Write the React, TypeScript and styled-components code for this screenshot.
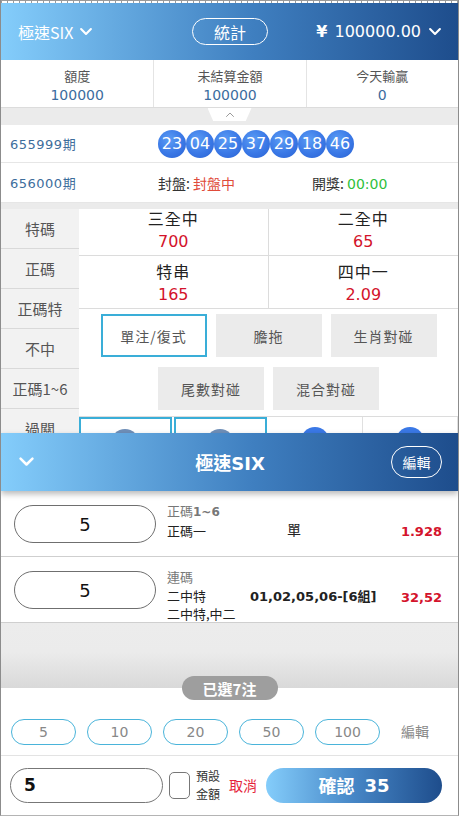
import React from "react";
import styled, { createGlobalStyle } from "styled-components";

const GlobalStyle = createGlobalStyle`
  html, body { margin: 0; padding: 0; background: #fff; }
  body { font-family: "DejaVu Sans", "Noto Sans CJK TC", sans-serif; color: #222; }
  *, *::before, *::after { box-sizing: border-box; }
`;

const BRAND_GRADIENT = "linear-gradient(to right, #84cdfb 0%, #3f7fc0 55%, #1e4d8c 100%)";

const Frame = styled.div`
  position: relative;
  width: 459px;
  height: 816px;
  overflow: hidden;
  display: flex;
  flex-direction: column;
  border-left: 1px solid #8c8c8c;
  border-right: 1px solid #8c8c8c;
  border-bottom: 1px solid #b4b4b4;
  background: #fff;
`;

const Ruler = styled.div`
  height: 3px;
  flex-shrink: 0;
  border-top: 1px solid #9a9a9a;
  background: repeating-linear-gradient(to right, #9a9a9a 0 1px, #fff 1px 6px);
`;

const TopBar = styled.header`
  height: 57px;
  flex-shrink: 0;
  display: grid;
  grid-template-columns: 1fr auto 1fr;
  align-items: center;
  padding: 0 16px 0 17px;
  background: ${BRAND_GRADIENT};
  color: #fff;
`;

const Brand = styled.div`
  display: flex;
  align-items: center;
  gap: 6px;
  font-size: 16px;
  font-family: "Noto Sans CJK TC", sans-serif;
`;

const OutlinePill = styled.div<{ $w: number; $h: number }>`
  width: ${(p) => p.$w}px;
  height: ${(p) => p.$h}px;
  border: 1.5px solid #fff;
  border-radius: ${(p) => p.$h / 2}px;
  display: flex;
  align-items: center;
  justify-content: center;
  color: #fff;
  font-size: ${(p) => (p.$h > 30 ? 14 : 16)}px;
  font-family: "Noto Sans CJK TC", sans-serif;
`;

const Balance = styled.div`
  justify-self: end;
  display: flex;
  align-items: center;
  gap: 7px;
  font-size: 16px;
  b { font-weight: 700; margin-right: 2px; }
`;

const Stats = styled.div`
  display: grid;
  grid-template-columns: repeat(3, 1fr);
  height: 48px;
  flex-shrink: 0;
  border-bottom: 1px solid #dcdcdc;
`;

const Stat = styled.div`
  display: flex;
  flex-direction: column;
  align-items: center;
  justify-content: center;
  padding-top: 4px;
  gap: 1px;
  & + & { border-left: 1px solid #e4e4e4; }
`;

const StatLabel = styled.span`
  font-size: 13px;
  line-height: 18px;
  color: #555;
  font-family: "Noto Sans CJK TC", sans-serif;
`;

const StatValue = styled.span`
  font-size: 14px;
  line-height: 19px;
  color: #3b6c9e;
`;

const Handle = styled.div`
  height: 17px;
  flex-shrink: 0;
  background: #ebebeb;
  display: flex;
  justify-content: center;
`;

const HandleTab = styled.div`
  width: 44px;
  height: 13px;
  background: #fff;
  clip-path: polygon(0 0, 100% 0, 87% 100%, 13% 100%);
  display: flex;
  align-items: center;
  justify-content: center;
`;

const DrawRow = styled.div<{ $h: number }>`
  height: ${(p) => p.$h}px;
  flex-shrink: 0;
  display: flex;
  align-items: center;
  padding-left: 9px;
  border-bottom: 1px solid #e6e6e6;
  font-size: 13px;
`;

const Period = styled.span`
  width: 148px;
  color: #3d6d9c;
  letter-spacing: 0.5px;
`;

const Balls = styled.div`
  display: flex;
`;

const Ball = styled.span`
  width: 28px;
  height: 28px;
  border-radius: 50%;
  display: flex;
  align-items: center;
  justify-content: center;
  color: #fff;
  font-size: 16px;
  background: radial-gradient(circle at 40% 35%, #5b9df5 0%, #3a78e6 55%, #2a62d2 100%);
`;

const StatusGroup = styled.span<{ $w?: number }>`
  width: ${(p) => (p.$w ? `${p.$w}px` : "auto")};
  color: #333;
  font-size: 14px;
  font-family: "Noto Sans CJK TC", "DejaVu Sans", sans-serif;
`;

const Tone = styled.span<{ $c: string }>`
  color: ${(p) => p.$c};
  font-family: "DejaVu Sans", "Noto Sans CJK TC", sans-serif;
  font-size: 14px;
`;

const Body = styled.div`
  flex: 1;
  min-height: 0;
  display: grid;
  grid-template-columns: 78px 1fr;
  border-top: 6px solid #ebebeb;
`;

const Nav = styled.nav`
  background: #f2f2f2;
  display: flex;
  flex-direction: column;
`;

const NavItem = styled.div`
  height: 40px;
  flex-shrink: 0;
  display: flex;
  align-items: center;
  justify-content: center;
  border-bottom: 1px solid #d9d9d9;
  font-size: 15px;
  color: #555;
  font-family: "Noto Sans CJK TC", "DejaVu Sans", sans-serif;
`;

const Panel = styled.div`
  min-width: 0;
`;

const OddsGrid = styled.div`
  display: grid;
  grid-template-columns: 1fr 1fr;
  grid-template-rows: 47px 53px;
`;

const OddsCell = styled.div`
  display: flex;
  flex-direction: column;
  align-items: center;
  justify-content: flex-end;
  border-bottom: 1px solid #dcdcdc;
  &:nth-child(odd) { border-right: 1px solid #dcdcdc; }
`;

const OddsTitle = styled.span`
  font-size: 16px;
  line-height: 22px;
  letter-spacing: 1px;
  color: #222;
  font-family: "Noto Sans CJK TC", sans-serif;
`;

const OddsValue = styled.span`
  font-size: 16px;
  line-height: 26px;
  color: #d3132b;
`;

const Modes = styled.div`
  display: flex;
  flex-wrap: wrap;
  justify-content: center;
  gap: 10px 9px;
  padding: 5px 0 6px;
`;

const ModeButton = styled.div<{ $active?: boolean }>`
  width: 106px;
  height: 43px;
  display: flex;
  align-items: center;
  justify-content: center;
  font-size: 14px;
  letter-spacing: 1px;
  color: #555;
  font-family: "Noto Sans CJK TC", "DejaVu Sans", sans-serif;
  background: ${(p) => (p.$active ? "#fff" : "#ebebeb")};
  border: ${(p) => (p.$active ? "2px solid #3aaed8" : "none")};
`;

const PickRow = styled.div`
  display: grid;
  grid-template-columns: repeat(4, 1fr);
  border-top: 1px solid #dcdcdc;
`;

const PickCell = styled.div<{ $active?: boolean }>`
  height: 70px;
  display: flex;
  justify-content: center;
  padding-top: 10px;
  border: ${(p) => (p.$active ? "2px solid #3aaed8" : "none")};
  border-right: ${(p) => (p.$active ? "2px solid #3aaed8" : "1px solid #e0e0e0")};
  margin-right: ${(p) => (p.$active ? "2px" : "0")};
`;

const PickBall = styled.span<{ $muted?: boolean }>`
  width: 28px;
  height: 28px;
  border-radius: 50%;
  background: ${(p) => (p.$muted ? "#6f8fb8" : "#3a78e6")};
`;

/* ---------- bottom sheet ---------- */

const Sheet = styled.section`
  position: absolute;
  left: 0;
  right: 0;
  top: 433px;
  bottom: 0;
  z-index: 5;
  display: flex;
  flex-direction: column;
  background: #fff;
`;

const SheetHeader = styled.header`
  position: relative;
  z-index: 2;
  height: 58px;
  flex-shrink: 0;
  display: grid;
  grid-template-columns: 1fr auto 1fr;
  align-items: center;
  padding: 0 16px 0 17px;
  background: ${BRAND_GRADIENT};
  box-shadow: 0 3px 6px rgba(0, 0, 0, 0.28);
  color: #fff;
`;

const SheetTitle = styled.div`
  font-size: 18px;
  font-weight: 700;
  font-family: "DejaVu Sans", "Noto Sans CJK TC", sans-serif;
`;

const HeaderEnd = styled.div`
  justify-self: end;
`;

const BetRow = styled.div`
  position: relative;
  z-index: 1;
  height: 66px;
  flex-shrink: 0;
  display: grid;
  grid-template-columns: 153px 83px 88px 1fr;
  align-items: start;
  padding: 0 16px 0 13px;
  border-bottom: 1px solid #cfcfcf;
`;

const StakeInput = styled.input`
  margin-top: 14px;
  width: 142px;
  height: 38px;
  border: 1px solid #6f6f6f;
  border-radius: 19px;
  text-align: center;
  font-size: 18px;
  font-family: "DejaVu Sans", sans-serif;
  color: #111;
  background: #fff;
  outline: none;
`;

const BetInfo = styled.div`
  padding-top: 11px;
  display: flex;
  flex-direction: column;
  font-size: 13px;
  line-height: 18.5px;
  color: #222;
  white-space: nowrap;
  font-family: "Noto Sans CJK TC", "DejaVu Sans", sans-serif;
`;

const BetCategory = styled.span`
  color: #777;
  font-family: "Noto Sans CJK TC", sans-serif;
  b { font-family: "DejaVu Sans", sans-serif; font-weight: 700; font-size: 12px; }
`;

const BetContent = styled.div<{ $bold?: boolean }>`
  padding-top: 30px;
  line-height: 19px;
  text-align: center;
  white-space: nowrap;
  font-size: ${(p) => (p.$bold ? 13 : 14)}px;
  font-weight: ${(p) => (p.$bold ? 700 : 400)};
  color: #222;
`;

const BetOdds = styled.div`
  padding-top: 31px;
  line-height: 19px;
  text-align: right;
  font-size: 13px;
  font-weight: 700;
  color: #d4132c;
`;

const Filler = styled.div`
  flex: 1;
  background: linear-gradient(to bottom, #ececec 0%, #ebebeb 45%, #d9d9d9 100%);
`;

const Footer = styled.footer`
  position: relative;
  flex-shrink: 0;
  background: #fff;
`;

const CountBadge = styled.div`
  position: absolute;
  top: 0;
  left: 50%;
  transform: translate(-50%, -50%);
  width: 96px;
  height: 24px;
  border-radius: 12px;
  background: #9e9e9e;
  color: #fff;
  font-size: 15px;
  font-weight: 700;
  display: flex;
  align-items: center;
  justify-content: center;
  font-family: "Noto Sans CJK TC", "DejaVu Sans", sans-serif;
`;

const ChipRow = styled.div`
  height: 68px;
  display: flex;
  align-items: flex-end;
  gap: 11px;
  padding: 0 0 10px 10px;
  border-bottom: 1px solid #e3e3e3;
`;

const Chip = styled.div`
  width: 65px;
  height: 26px;
  border: 1.5px solid #4ab4da;
  border-radius: 13px;
  display: flex;
  align-items: center;
  justify-content: center;
  font-size: 14px;
  color: #888;
`;

const ChipEdit = styled.span`
  margin-left: 10px;
  line-height: 28px;
  font-size: 14px;
  color: #888;
  font-family: "Noto Sans CJK TC", sans-serif;
`;

const ConfirmRow = styled.div`
  display: flex;
  align-items: center;
  padding: 11px 16px 12px 9px;
`;

const AmountField = styled.input`
  width: 153px;
  height: 35px;
  border: 1px solid #777;
  border-radius: 17.5px;
  padding-left: 13px;
  font-size: 17px;
  font-weight: 700;
  font-family: "DejaVu Sans", sans-serif;
  color: #111;
  background: #fff;
  outline: none;
`;

const CheckBox = styled.span`
  margin-left: 6px;
  width: 21px;
  height: 27px;
  border: 1px solid #777;
  border-radius: 5px;
  background: #fff;
`;

const CheckLabel = styled.span`
  margin-left: 6px;
  display: flex;
  flex-direction: column;
  font-size: 12px;
  line-height: 18px;
  color: #333;
  font-family: "Noto Sans CJK TC", sans-serif;
`;

const CancelLink = styled.span`
  margin: 0 9px 0 9px;
  font-size: 14px;
  color: #e5243b;
  font-family: "Noto Sans CJK TC", sans-serif;
`;

const ConfirmButton = styled.button`
  flex: 1;
  height: 35px;
  border: none;
  border-radius: 18px;
  background: linear-gradient(to right, #84cdfb 0%, #4686c6 50%, #1e4d8c 100%);
  color: #fff;
  font-size: 18px;
  font-weight: 700;
  font-family: "Noto Sans CJK TC", "DejaVu Sans", sans-serif;
  display: flex;
  align-items: center;
  justify-content: center;
  gap: 10px;
  span { font-family: "DejaVu Sans", sans-serif; }
`;

const Chevron = ({ size = 14, up = false, color = "#fff", weight = 3 }: { size?: number; up?: boolean; color?: string; weight?: number }) => (
  <svg width={size} height={size * 0.7} viewBox="0 0 20 14" fill="none">
    <polyline
      points={up ? "3,11 10,4 17,11" : "3,3 10,10 17,3"}
      stroke={color}
      strokeWidth={weight}
      strokeLinecap="round"
      strokeLinejoin="round"
    />
  </svg>
);

const balls = ["23", "04", "25", "37", "29", "18", "46"];
const odds = [
  ["三全中", "700"],
  ["二全中", "65"],
  ["特串", "165"],
  ["四中一", "2.09"],
];
const navItems = ["特碼", "正碼", "正碼特", "不中", "正碼1~6", "過關"];
const chips = ["5", "10", "20", "50", "100"];

export default function App() {
  return (
    <>
      <GlobalStyle />
      <Frame>
        <Ruler />
        <TopBar>
          <Brand>
            極速SIX <Chevron size={14} />
          </Brand>
          <OutlinePill $w={76} $h={27}>統計</OutlinePill>
          <Balance>
            <span><b>¥</b> 100000.00</span>
            <Chevron size={14} />
          </Balance>
        </TopBar>

        <Stats>
          <Stat>
            <StatLabel>額度</StatLabel>
            <StatValue>100000</StatValue>
          </Stat>
          <Stat>
            <StatLabel>未結算金額</StatLabel>
            <StatValue>100000</StatValue>
          </Stat>
          <Stat>
            <StatLabel>今天輸贏</StatLabel>
            <StatValue>0</StatValue>
          </Stat>
        </Stats>

        <Handle>
          <HandleTab>
            <Chevron size={10} up color="#9a9a9a" weight={2} />
          </HandleTab>
        </Handle>

        <DrawRow $h={38}>
          <Period>655999期</Period>
          <Balls>
            {balls.map((b) => (
              <Ball key={b}>{b}</Ball>
            ))}
          </Balls>
        </DrawRow>
        <DrawRow $h={40}>
          <Period>656000期</Period>
          <StatusGroup $w={154}>
            封盤: <Tone $c="#e04b3a">封盤中</Tone>
          </StatusGroup>
          <StatusGroup>
            開獎: <Tone $c="#2fbf3c">00:00</Tone>
          </StatusGroup>
        </DrawRow>

        <Body>
          <Nav>
            {navItems.map((n) => (
              <NavItem key={n}>{n}</NavItem>
            ))}
          </Nav>
          <Panel>
            <OddsGrid>
              {odds.map(([t, v]) => (
                <OddsCell key={t}>
                  <OddsTitle>{t}</OddsTitle>
                  <OddsValue>{v}</OddsValue>
                </OddsCell>
              ))}
            </OddsGrid>
            <Modes>
              <ModeButton $active>單注/復式</ModeButton>
              <ModeButton>膽拖</ModeButton>
              <ModeButton>生肖對碰</ModeButton>
              <ModeButton>尾數對碰</ModeButton>
              <ModeButton>混合對碰</ModeButton>
            </Modes>
            <PickRow>
              <PickCell $active><PickBall $muted /></PickCell>
              <PickCell $active><PickBall $muted /></PickCell>
              <PickCell><PickBall /></PickCell>
              <PickCell><PickBall /></PickCell>
            </PickRow>
          </Panel>
        </Body>

        <Sheet>
          <SheetHeader>
            <Chevron size={17} />
            <SheetTitle>極速SIX</SheetTitle>
            <HeaderEnd>
              <OutlinePill $w={51} $h={32}>編輯</OutlinePill>
            </HeaderEnd>
          </SheetHeader>

          <BetRow>
            <StakeInput defaultValue="5" readOnly />
            <BetInfo>
              <BetCategory>正碼<b>1~6</b></BetCategory>
              <span>正碼一</span>
            </BetInfo>
            <BetContent>單</BetContent>
            <BetOdds>1.928</BetOdds>
          </BetRow>
          <BetRow>
            <StakeInput defaultValue="5" readOnly />
            <BetInfo>
              <BetCategory>連碼</BetCategory>
              <span>二中特</span>
              <span>二中特,中二</span>
            </BetInfo>
            <BetContent $bold>01,02,05,06-[6組]</BetContent>
            <BetOdds>32,52</BetOdds>
          </BetRow>

          <Filler />

          <Footer>
            <CountBadge>已選7注</CountBadge>
            <ChipRow>
              {chips.map((c) => (
                <Chip key={c}>{c}</Chip>
              ))}
              <ChipEdit>編輯</ChipEdit>
            </ChipRow>
            <ConfirmRow>
              <AmountField defaultValue="5" readOnly />
              <CheckBox />
              <CheckLabel>
                <span>預設</span>
                <span>金額</span>
              </CheckLabel>
              <CancelLink>取消</CancelLink>
              <ConfirmButton>
                確認 <span>35</span>
              </ConfirmButton>
            </ConfirmRow>
          </Footer>
        </Sheet>
      </Frame>
    </>
  );
}
